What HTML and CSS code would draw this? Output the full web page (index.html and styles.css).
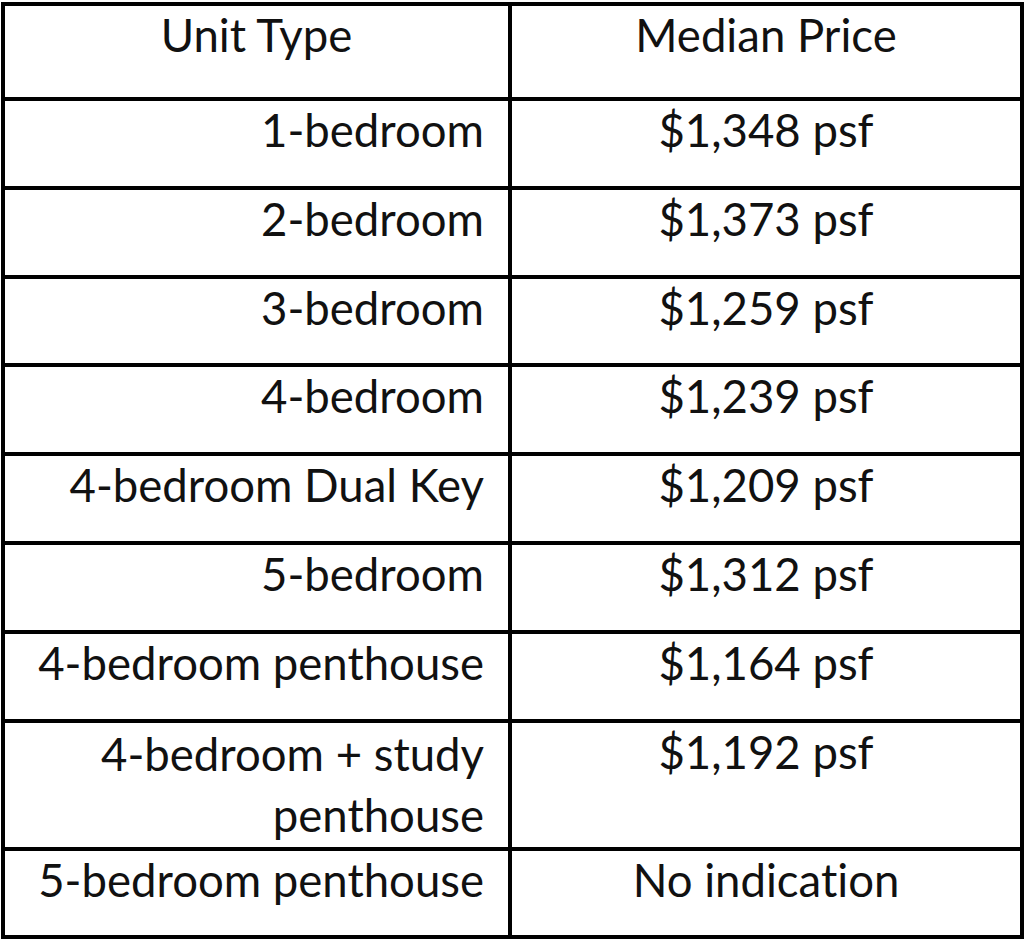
FILE: index.html
```html
<!DOCTYPE html>
<html>
<head>
<meta charset="utf-8">
<link rel="stylesheet" href="styles.css">
</head>
<body>
<table class="price-table">
  <colgroup>
    <col class="col-type">
    <col class="col-price">
  </colgroup>
  <tr class="row-head">
    <td class="cell-head">Unit Type</td>
    <td class="cell-head">Median Price</td>
  </tr>
  <tr class="row"><td class="cell-type">1-bedroom</td><td class="cell-price">$1,348 psf</td></tr>
  <tr class="row"><td class="cell-type">2-bedroom</td><td class="cell-price">$1,373 psf</td></tr>
  <tr class="row"><td class="cell-type">3-bedroom</td><td class="cell-price">$1,259 psf</td></tr>
  <tr class="row"><td class="cell-type">4-bedroom</td><td class="cell-price">$1,239 psf</td></tr>
  <tr class="row"><td class="cell-type">4-bedroom Dual Key</td><td class="cell-price">$1,209 psf</td></tr>
  <tr class="row"><td class="cell-type">5-bedroom</td><td class="cell-price">$1,312 psf</td></tr>
  <tr class="row"><td class="cell-type">4-bedroom penthouse</td><td class="cell-price">$1,164 psf</td></tr>
  <tr class="row-tall"><td class="cell-type">4-bedroom + study<br>penthouse</td><td class="cell-price">$1,192 psf</td></tr>
  <tr class="row"><td class="cell-type">5-bedroom penthouse</td><td class="cell-price">No indication</td></tr>
</table>
</body>
</html>
```
FILE: styles.css
```css
html, body {
  margin: 0;
  padding: 0;
  background: #ffffff;
}
.price-table {
  margin: 2px 0 0 1px;
  width: 1019px;
  border-collapse: collapse;
  table-layout: fixed;
  font-family: "Lato", "Open Sans", sans-serif;
  font-size: 45.5px;
  line-height: 58px;
  font-variant-ligatures: none;
  color: #111111;
}
.col-type { width: 507px; }
.col-price { width: 512px; }
.price-table td {
  border: 4px solid #000000;
  vertical-align: top;
  padding: 0 24px 0 24px;
  box-sizing: border-box;
}
.row-head { height: 95px; }
.row { height: 88.8px; }
.row-tall { height: 128px; }
.cell-head { text-align: center; }
.cell-type { text-align: right; }
.cell-price { text-align: center; }
.row-tall .cell-type { line-height: 61px; }
```
